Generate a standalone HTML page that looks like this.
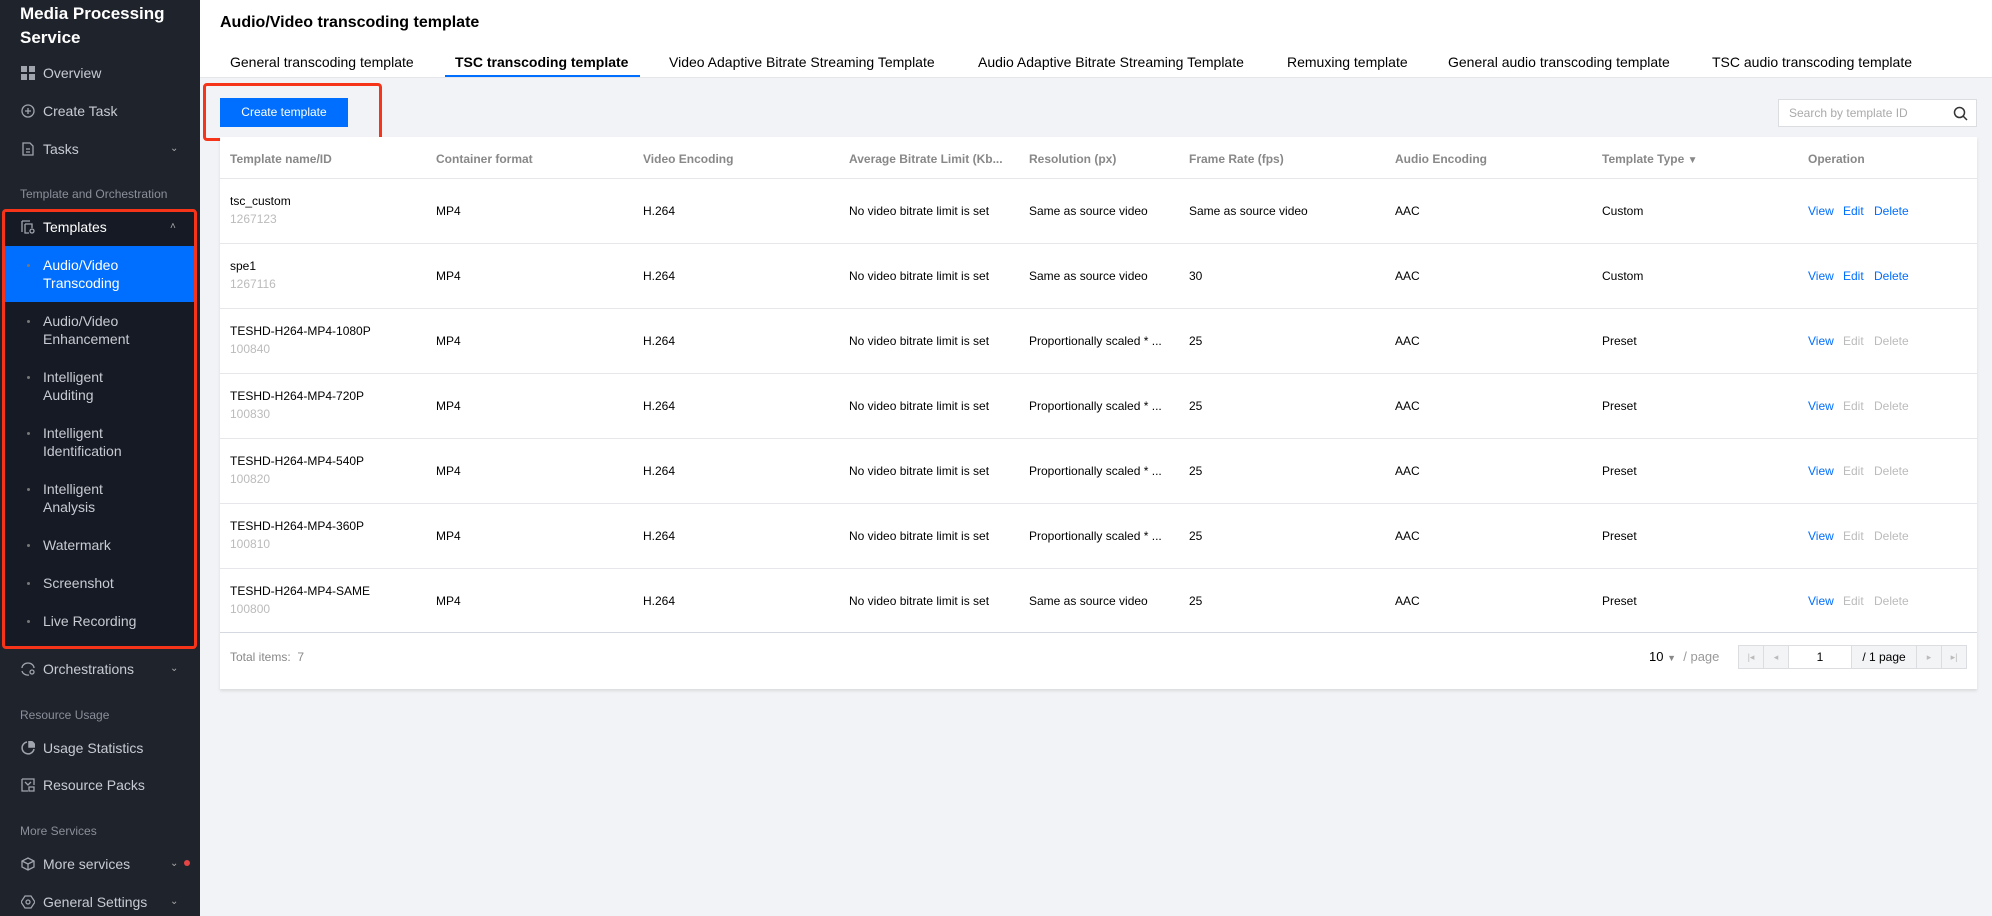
<!DOCTYPE html>
<html><head><meta charset="utf-8"><style>
*{box-sizing:border-box;margin:0;padding:0}
body{width:1992px;height:916px;overflow:hidden;background:#f2f3f6;font-family:"Liberation Sans",Arial,sans-serif;position:relative}
.sb{position:absolute;left:0;top:0;width:200px;height:916px;background:#1f232c;color:#c8cbd2}
.sb .t{position:absolute;left:20px;color:#fff;font-weight:bold;font-size:17px;line-height:24px;top:2px}
.mi{position:absolute;left:0;width:200px;font-size:14px;color:#c8cbd2;height:20px;line-height:20px}
.mi .tx{position:absolute;left:43px}
.mi .ic{position:absolute;left:21px;top:3px;width:14px;height:14px}
.mi .ar{position:absolute;left:170px;top:0;font-size:10px;color:#aaa}
.lab{position:absolute;left:20px;font-size:12px;color:#8a8f99}
.grp{position:absolute;left:3px;top:210px;width:194px;height:438px;background:#161a24}
.hl{position:absolute;left:3px;top:246px;width:191px;height:56px;background:#006eff}
.sub{position:absolute;left:43px;font-size:14px;line-height:18px;color:#c8cbd2}
.dot{position:absolute;left:27px;width:3px;height:3px;background:#777;border-radius:50%}
.red1{position:absolute;left:2px;top:209px;width:195px;height:440px;border:3px solid #f5341a;border-radius:4px}
.top{position:absolute;left:200px;top:0;width:1792px;height:78px;background:#fff;border-bottom:1px solid #e4e6ea}
.title{position:absolute;left:220px;top:14px;font-size:16px;font-weight:bold;color:#000}
.tab{position:absolute;top:54px;font-size:14px;color:#000}
.ul{position:absolute;left:445px;top:75px;width:195px;height:2px;background:#006eff}
.btn{position:absolute;left:220px;top:98px;width:128px;height:29px;background:#006eff;color:#fff;font-size:12px;text-align:center;line-height:29px}
.red2{position:absolute;left:203px;top:83px;width:179px;height:58px;border:3px solid #f5341a;border-radius:4px}
.search{position:absolute;left:1778px;top:99px;width:199px;height:28px;background:#fff;border:1px solid #dcdde0;font-size:12px;color:#aaa;line-height:26px;padding-left:10px}
.card{position:absolute;left:220px;top:137px;width:1757px;height:552px;background:#fff;box-shadow:0 2px 3px rgba(0,0,0,.1)}
.row{position:absolute;left:220px;width:1757px;border-bottom:1px solid #e5e7eb}
.c{position:absolute;font-size:12px;color:#000;white-space:nowrap}
.h{color:#888;font-weight:bold}
.g{color:#bbb}
.b{color:#006eff}
.pg{position:absolute;top:645px;height:24px;border:1px solid #dcdde0;background:#f3f4f6;text-align:center;line-height:22px}
.pa{color:#bbb;font-size:9px}
</style></head><body>
<div class="sb">
<div class="t">Media Processing<br>Service</div>
<div class="mi" style="top:63px"><svg class="ic" viewBox="0 0 14 14" fill="#a0a4ad"><rect x="0" y="0" width="6" height="6"/><rect x="8" y="0" width="6" height="6"/><rect x="0" y="8" width="6" height="6"/><rect x="8" y="8" width="6" height="6"/></svg><span class="tx">Overview</span></div>
<div class="mi" style="top:101px"><svg class="ic" viewBox="0 0 14 14" fill="none" stroke="#a0a4ad" stroke-width="1.3"><circle cx="7" cy="7" r="6"/><path d="M7 4v6M4 7h6"/></svg><span class="tx">Create Task</span></div>
<div class="mi" style="top:139px"><svg class="ic" viewBox="0 0 14 14" fill="none" stroke="#a0a4ad" stroke-width="1.3"><path d="M2 1h7l3 3v9H2z M5 7h4M5 10h4"/></svg><span class="tx">Tasks</span><span class="ar">⌄</span></div>
<div class="lab" style="top:187px">Template and Orchestration</div>
<div class="grp"></div>
<div class="hl"></div>
<div class="mi" style="top:217px"><svg class="ic" viewBox="0 0 14 14" fill="none" stroke="#a0a4ad" stroke-width="1.3"><path d="M1 1h8M1 1v11M4 4h7v4M4 4v9h4"/><circle cx="11" cy="11" r="2"/></svg><span class="tx" style="color:#fff">Templates</span><span class="ar">˄</span></div>
<div class="dot" style="top:264px"></div><div class="sub" style="top:256px;color:#fff">Audio/Video<br>Transcoding</div>
<div class="dot" style="top:320px"></div><div class="sub" style="top:312px">Audio/Video<br>Enhancement</div>
<div class="dot" style="top:376px"></div><div class="sub" style="top:368px">Intelligent<br>Auditing</div>
<div class="dot" style="top:432px"></div><div class="sub" style="top:424px">Intelligent<br>Identification</div>
<div class="dot" style="top:488px"></div><div class="sub" style="top:480px">Intelligent<br>Analysis</div>
<div class="dot" style="top:544px"></div><div class="sub" style="top:536px">Watermark</div>
<div class="dot" style="top:582px"></div><div class="sub" style="top:574px">Screenshot</div>
<div class="dot" style="top:620px"></div><div class="sub" style="top:612px">Live Recording</div>
<div class="red1"></div>
<div class="mi" style="top:659px"><svg class="ic" viewBox="0 0 14 14" fill="none" stroke="#a0a4ad" stroke-width="1.3"><path d="M1 6a6 5 0 0 1 12 0M1 9a6 5 0 0 0 7 4"/><circle cx="11" cy="10" r="2"/></svg><span class="tx">Orchestrations</span><span class="ar">⌄</span></div>
<div class="lab" style="top:708px">Resource Usage</div>
<div class="mi" style="top:738px"><svg class="ic" viewBox="0 0 14 14" fill="none" stroke="#a0a4ad" stroke-width="1.5"><path d="M6 1a6 6 0 1 0 7 7"/><path d="M8 0v6h6A6 6 0 0 0 8 0z" fill="#a0a4ad"/></svg><span class="tx">Usage Statistics</span></div>
<div class="mi" style="top:775px"><svg class="ic" viewBox="0 0 14 14" fill="none" stroke="#a0a4ad" stroke-width="1.3"><path d="M1 1h12v6M1 1v12h6M4 4l3 3 3-3M8 9h5v4H8z"/></svg><span class="tx">Resource Packs</span></div>
<div class="lab" style="top:824px">More Services</div>
<div class="mi" style="top:854px"><svg class="ic" viewBox="0 0 14 14" fill="none" stroke="#a0a4ad" stroke-width="1.3"><path d="M7 1l6 3v6l-6 3-6-3V4z M1 4l6 3 6-3M7 7v6"/></svg><span class="tx">More services</span><span class="ar">⌄</span></div>
<div style="position:absolute;left:184px;top:860px;width:6px;height:6px;border-radius:50%;background:#e54545"></div>
<div class="mi" style="top:892px"><svg class="ic" viewBox="0 0 14 14" fill="none" stroke="#a0a4ad" stroke-width="1.3"><path d="M4 1h6l4 6-4 6H4L0 7z"/><circle cx="7" cy="7" r="2"/></svg><span class="tx">General Settings</span><span class="ar">⌄</span></div>
</div>

<div class="top"></div>
<div class="title">Audio/Video transcoding template</div>
<div class="tab" style="left:230px">General transcoding template</div>
<div class="tab" style="left:455px;font-weight:bold">TSC transcoding template</div>
<div class="tab" style="left:669px">Video Adaptive Bitrate Streaming Template</div>
<div class="tab" style="left:978px">Audio Adaptive Bitrate Streaming Template</div>
<div class="tab" style="left:1287px">Remuxing template</div>
<div class="tab" style="left:1448px">General audio transcoding template</div>
<div class="tab" style="left:1712px">TSC audio transcoding template</div>
<div class="ul"></div>
<div class="btn">Create template</div>
<div class="red2"></div>
<div class="search">Search by template ID<svg style="position:absolute;right:8px;top:6px" width="15" height="15" viewBox="0 0 15 15" fill="none" stroke="#333" stroke-width="1.5"><circle cx="6.5" cy="6.5" r="5"/><path d="M10 10l4 4"/></svg></div>
<div class="card"></div>
<div class="row" style="top:137px;height:42px"></div>
<div class="c h" style="left:230px;top:152px">Template name/ID</div>
<div class="c h" style="left:436px;top:152px">Container format</div>
<div class="c h" style="left:643px;top:152px">Video Encoding</div>
<div class="c h" style="left:849px;top:152px">Average Bitrate Limit (Kb...</div>
<div class="c h" style="left:1029px;top:152px">Resolution (px)</div>
<div class="c h" style="left:1189px;top:152px">Frame Rate (fps)</div>
<div class="c h" style="left:1395px;top:152px">Audio Encoding</div>
<div class="c h" style="left:1602px;top:152px">Template Type <span style="font-size:10px">▼</span></div>
<div class="c h" style="left:1808px;top:152px">Operation</div>

<div class="row" style="top:179px;height:65px"></div>
<div class="c" style="left:230px;top:194px">tsc_custom</div><div class="c g" style="left:230px;top:212px">1267123</div>
<div class="c" style="left:436px;top:204px">MP4</div><div class="c" style="left:643px;top:204px">H.264</div><div class="c" style="left:849px;top:204px">No video bitrate limit is set</div><div class="c" style="left:1029px;top:204px">Same as source video</div><div class="c" style="left:1189px;top:204px">Same as source video</div><div class="c" style="left:1395px;top:204px">AAC</div><div class="c" style="left:1602px;top:204px">Custom</div>
<div class="c b" style="left:1808px;top:204px">View</div><div class="c b" style="left:1843px;top:204px">Edit</div><div class="c b" style="left:1874px;top:204px">Delete</div>

<div class="row" style="top:244px;height:65px"></div>
<div class="c" style="left:230px;top:259px">spe1</div><div class="c g" style="left:230px;top:277px">1267116</div>
<div class="c" style="left:436px;top:269px">MP4</div><div class="c" style="left:643px;top:269px">H.264</div><div class="c" style="left:849px;top:269px">No video bitrate limit is set</div><div class="c" style="left:1029px;top:269px">Same as source video</div><div class="c" style="left:1189px;top:269px">30</div><div class="c" style="left:1395px;top:269px">AAC</div><div class="c" style="left:1602px;top:269px">Custom</div>
<div class="c b" style="left:1808px;top:269px">View</div><div class="c b" style="left:1843px;top:269px">Edit</div><div class="c b" style="left:1874px;top:269px">Delete</div>

<div class="row" style="top:309px;height:65px"></div>
<div class="c" style="left:230px;top:324px">TESHD-H264-MP4-1080P</div><div class="c g" style="left:230px;top:342px">100840</div>
<div class="c" style="left:436px;top:334px">MP4</div><div class="c" style="left:643px;top:334px">H.264</div><div class="c" style="left:849px;top:334px">No video bitrate limit is set</div><div class="c" style="left:1029px;top:334px">Proportionally scaled * ...</div><div class="c" style="left:1189px;top:334px">25</div><div class="c" style="left:1395px;top:334px">AAC</div><div class="c" style="left:1602px;top:334px">Preset</div>
<div class="c b" style="left:1808px;top:334px">View</div><div class="c g" style="left:1843px;top:334px">Edit</div><div class="c g" style="left:1874px;top:334px">Delete</div>

<div class="row" style="top:374px;height:65px"></div>
<div class="c" style="left:230px;top:389px">TESHD-H264-MP4-720P</div><div class="c g" style="left:230px;top:407px">100830</div>
<div class="c" style="left:436px;top:399px">MP4</div><div class="c" style="left:643px;top:399px">H.264</div><div class="c" style="left:849px;top:399px">No video bitrate limit is set</div><div class="c" style="left:1029px;top:399px">Proportionally scaled * ...</div><div class="c" style="left:1189px;top:399px">25</div><div class="c" style="left:1395px;top:399px">AAC</div><div class="c" style="left:1602px;top:399px">Preset</div>
<div class="c b" style="left:1808px;top:399px">View</div><div class="c g" style="left:1843px;top:399px">Edit</div><div class="c g" style="left:1874px;top:399px">Delete</div>

<div class="row" style="top:439px;height:65px"></div>
<div class="c" style="left:230px;top:454px">TESHD-H264-MP4-540P</div><div class="c g" style="left:230px;top:472px">100820</div>
<div class="c" style="left:436px;top:464px">MP4</div><div class="c" style="left:643px;top:464px">H.264</div><div class="c" style="left:849px;top:464px">No video bitrate limit is set</div><div class="c" style="left:1029px;top:464px">Proportionally scaled * ...</div><div class="c" style="left:1189px;top:464px">25</div><div class="c" style="left:1395px;top:464px">AAC</div><div class="c" style="left:1602px;top:464px">Preset</div>
<div class="c b" style="left:1808px;top:464px">View</div><div class="c g" style="left:1843px;top:464px">Edit</div><div class="c g" style="left:1874px;top:464px">Delete</div>

<div class="row" style="top:504px;height:65px"></div>
<div class="c" style="left:230px;top:519px">TESHD-H264-MP4-360P</div><div class="c g" style="left:230px;top:537px">100810</div>
<div class="c" style="left:436px;top:529px">MP4</div><div class="c" style="left:643px;top:529px">H.264</div><div class="c" style="left:849px;top:529px">No video bitrate limit is set</div><div class="c" style="left:1029px;top:529px">Proportionally scaled * ...</div><div class="c" style="left:1189px;top:529px">25</div><div class="c" style="left:1395px;top:529px">AAC</div><div class="c" style="left:1602px;top:529px">Preset</div>
<div class="c b" style="left:1808px;top:529px">View</div><div class="c g" style="left:1843px;top:529px">Edit</div><div class="c g" style="left:1874px;top:529px">Delete</div>

<div class="row" style="top:569px;height:64px;border-bottom-color:#d5d8de"></div>
<div class="c" style="left:230px;top:584px">TESHD-H264-MP4-SAME</div><div class="c g" style="left:230px;top:602px">100800</div>
<div class="c" style="left:436px;top:594px">MP4</div><div class="c" style="left:643px;top:594px">H.264</div><div class="c" style="left:849px;top:594px">No video bitrate limit is set</div><div class="c" style="left:1029px;top:594px">Same as source video</div><div class="c" style="left:1189px;top:594px">25</div><div class="c" style="left:1395px;top:594px">AAC</div><div class="c" style="left:1602px;top:594px">Preset</div>
<div class="c b" style="left:1808px;top:594px">View</div><div class="c g" style="left:1843px;top:594px">Edit</div><div class="c g" style="left:1874px;top:594px">Delete</div>

<div class="c" style="left:230px;top:650px;color:#888">Total items:&nbsp; 7</div>
<div class="c" style="left:1649px;top:649px;font-size:13px">10 <span style="color:#888;font-size:9px">▼</span> <span style="color:#999">&nbsp;/ page</span></div>
<div class="pg pa" style="left:1738px;width:26px">|◂</div>
<div class="pg pa" style="left:1763px;width:26px">◂</div>
<div class="pg" style="left:1788px;width:64px;background:#fff;font-size:12px">1</div>
<div class="pg" style="left:1851px;width:66px;font-size:12px">/ 1 page</div>
<div class="pg pa" style="left:1916px;width:26px">▸</div>
<div class="pg pa" style="left:1941px;width:26px">▸|</div>
</body></html>
